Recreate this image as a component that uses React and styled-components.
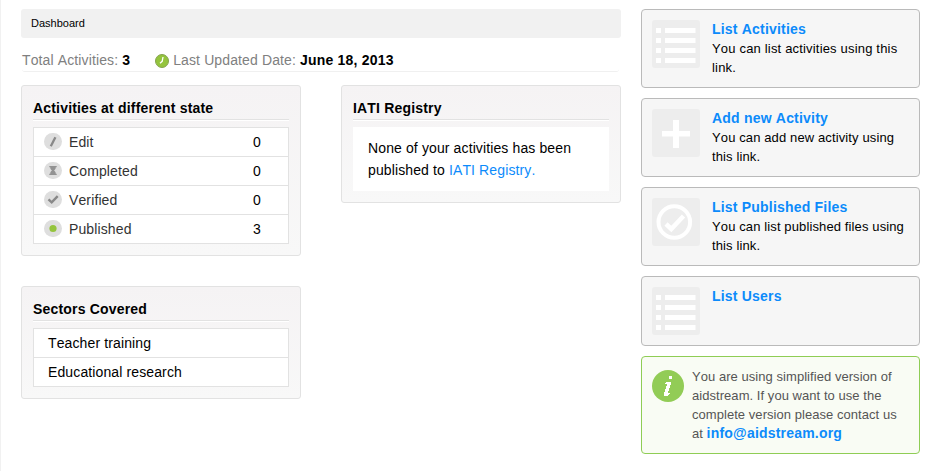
import React from 'react';
import styled, { createGlobalStyle } from 'styled-components';

const GlobalStyle = createGlobalStyle`
  * { box-sizing: border-box; }
  body {
    margin: 0;
    background: #fff;
    color: #000;
    font-family: "Liberation Sans", Arial, sans-serif;
    font-size: 14px;
    font-kerning: none;
    letter-spacing: 0.12px;
  }
`;

const Page = styled.div`
  display: flex;
  align-items: flex-start;
  gap: 20px;
  height: 471px;
  padding: 9px 0 0 20px;
  border-left: 1px solid #f1f1f1;
  overflow: hidden;
`;

const Main = styled.main`
  width: 600px;
`;

const Breadcrumb = styled.div`
  height: 29px;
  padding-left: 10px;
  border-radius: 3px;
  background: #f1f1f1;
  font-size: 11px;
  line-height: 28px;
  letter-spacing: 0;
`;

const Summary = styled.div`
  display: flex;
  height: 34px;
  margin: 0 2px 0 1px;
  padding-top: 12px;
  border-bottom: 1px solid #f0f0f0;
  border-radius: 3px;
  color: #808080;
  line-height: 20px;
`;

const SummaryItem = styled.div`
  display: flex;
  align-items: flex-start;
  gap: 4px;
  margin-right: 25px;
  white-space: nowrap;

  strong {
    color: #000;
    letter-spacing: 0.2px;
  }
`;

const Columns = styled.div`
  display: flex;
  align-items: flex-start;
  gap: 40px;
  margin-top: 13px;
`;

const Column = styled.div`
  display: grid;
  gap: 30px;
  width: 280px;
`;

const Panel = styled.section`
  padding: 11px;
  border: 1px solid #e2e2e2;
  border-radius: 3px;
  background: linear-gradient(#f5f3f4, #f8f8f8);
`;

const PanelTitle = styled.h2`
  height: 23px;
  margin: 0 0 7px;
  padding-top: 1px;
  border-bottom: 1px solid #e2e2e2;
  box-shadow: 0 1px #fff;
  font-size: 14px;
  line-height: 20px;
  letter-spacing: 0.18px;
`;

const List = styled.div`
  border: 1px solid #e2e2e2;
  background: #fff;
`;

const Row = styled.div`
  display: flex;
  align-items: center;
  height: ${({ $last }) => ($last ? 28 : 29)}px;
  padding: 0 27px 0 ${({ $plain }) => ($plain ? 14 : 10)}px;
  border-bottom: ${({ $last }) => ($last ? 0 : 1)}px solid #e2e2e2;
  color: ${({ $plain }) => ($plain ? '#000' : '#333')};
  line-height: 28px;
`;

const RowLabel = styled.span`
  flex: 1;
  margin-left: 7px;
`;

const Count = styled.span`
  color: #000;
`;

const Note = styled.div`
  padding: 10px 15px;
  background: #fff;
  line-height: 22px;
`;

const Link = styled.a`
  color: #0c8bfb;
  font-size: 14px;
  font-weight: ${({ $bold }) => ($bold ? 700 : 400)};
  letter-spacing: ${({ $bold }) => ($bold ? 0.2 : 0.12)}px;
  line-height: 1;
  text-decoration: none;
`;

const Sidebar = styled.aside`
  display: grid;
  gap: 10px;
  width: 279px;
`;

const Card = styled.div`
  display: flex;
  align-items: flex-start;
  gap: 12px;
  padding: 10px;
  border: 1px solid #bababa;
  border-radius: 4px;
  background: #f6f6f6;
  font-size: 13px;
  line-height: 19px;
`;

const InfoCard = styled(Card)`
  gap: 8px;
  border-color: #8fcd55;
  background: #f9fcf4;
  color: #555;
`;

const CardBody = styled.div`
  flex: 1;
  min-width: 0;
  letter-spacing: ${({ $tracking = 0.12 }) => $tracking}px;
`;

const CardTitle = styled.div`
  height: 19px;
`;

const Icon = styled.svg`
  display: block;
  flex: none;
`;

const InfoIcon = styled(Icon)`
  margin-top: 3px;
`;

const Clock = styled(Icon)`
  margin-top: 4px;
`;

const StateSvg = styled(Icon)`
  margin-bottom: 1px;
`;

const stateGlyphs = {
  edit: <path d="M6.8 13.2 11.4 4.2" stroke="#888" strokeWidth="2.3" fill="none" />,
  completed: (
    <path d="M5.3 4h7.4v1.3h-.9c0 1.800-1 2.500-1.800 3.200.9.7 1.800 1.500 1.800 3.200h.9V13H5.300v-1.300h.9c0-1.700.9-2.500 1.800-3.200-.8-.7-1.800-1.400-1.800-3.200h-.9Z" fill="#929292" />
  ),
  verified: <path d="m4.500 8.300 3.200 3 6-6.200" stroke="#888" strokeWidth="2.400" fill="none" />,
  published: <circle cx="9" cy="8.500" r="3.600" fill="#94c43d" />,
};

function StateIcon({ type }) {
  return (
    <StateSvg width="18" height="17" viewBox="0 0 18 17">
      <rect width="18" height="17" rx="8.500" fill="#dedede" />
      {stateGlyphs[type]}
    </StateSvg>
  );
}

const cardGlyphs = {
  list: [8, 18, 28, 38].map((y) => (
    <path key={y} d={`M4 ${y}h5v5H4zM13 ${y}h30.500v5H13z`} fill="#fff" />
  )),
  add: <path d="M21 11h6v11h11v5.500H27V39h-6V27.500H10V22h11Z" fill="#fff" />,
  check: (
    <g fill="none" stroke="#fff">
      <circle cx="22.300" cy="24" r="15.800" strokeWidth="4" />
      <path d="m14 26 5.300 5L31.500 18" strokeWidth="4.500" />
    </g>
  ),
};

function CardIcon({ type }) {
  return (
    <Icon width="48" height="48" viewBox="0 0 48 48">
      <rect width="48" height="48" rx="3" fill="#ededed" />
      {cardGlyphs[type]}
    </Icon>
  );
}

function ClockIcon() {
  return (
    <Clock width="14" height="14" viewBox="0 0 14 14">
      <circle cx="7" cy="7" r="6.500" fill="#94c43d" stroke="#85a34e" />
      <path d="M8 3 7.200 7.300 5 9.200" stroke="#fff" strokeWidth="1.300" fill="none" />
    </Clock>
  );
}

const states = [
  ['edit', 'Edit', 0],
  ['completed', 'Completed', 0],
  ['verified', 'Verified', 0],
  ['published', 'Published', 3],
];

const sectors = ['Teacher training', 'Educational research'];

const actions = [
  ['list', 'List Activities', 'You can list activities using this link.', 0.18],
  ['add', 'Add new Activity', 'You can add new activity using this link.'],
  ['check', 'List Published Files', 'You can list published files using this link.'],
  ['list', 'List Users', ''],
];

export default function App() {
  return (
    <>
      <GlobalStyle />
      <Page>
        <Main>
          <Breadcrumb>Dashboard</Breadcrumb>
          <Summary>
            <SummaryItem>
              <span>Total Activities: <strong>3</strong></span>
            </SummaryItem>
            <SummaryItem>
              <ClockIcon />
              <span>Last Updated Date: <strong>June 18, 2013</strong></span>
            </SummaryItem>
          </Summary>
          <Columns>
            <Column>
              <Panel>
                <PanelTitle>Activities at different state</PanelTitle>
                <List>
                  {states.map(([type, label, count], i) => (
                    <Row key={type} $last={i === states.length - 1}>
                      <StateIcon type={type} />
                      <RowLabel>{label}</RowLabel>
                      <Count>{count}</Count>
                    </Row>
                  ))}
                </List>
              </Panel>
              <Panel>
                <PanelTitle>Sectors Covered</PanelTitle>
                <List>
                  {sectors.map((name, i) => (
                    <Row key={name} $plain $last={i === sectors.length - 1}>{name}</Row>
                  ))}
                </List>
              </Panel>
            </Column>
            <Column>
              <Panel>
                <PanelTitle>IATI Registry</PanelTitle>
                <Note>
                  None of your activities has been published to <Link>IATI Registry.</Link>
                </Note>
              </Panel>
            </Column>
          </Columns>
        </Main>
        <Sidebar>
          {actions.map(([type, title, text, tracking]) => (
            <Card key={title}>
              <CardIcon type={type} />
              <CardBody $tracking={tracking}>
                <CardTitle><Link $bold>{title}</Link></CardTitle>
                {text}
              </CardBody>
            </Card>
          ))}
          <InfoCard>
            <InfoIcon width="32" height="32" viewBox="0 0 32 32">
              <circle cx="16" cy="16" r="16" fill="#92cc56" />
              <path d="M17 6h3v3h-3zM14 12h5v3h-1v3h-1v3h-1v2h2v1h-1v1h-1v1h-4v-4h1v-3h1v-3h1v-2h-2v-1h1Z" fill="#fff" />
            </InfoIcon>
            <CardBody $tracking={0.05}>
              You are using simplified version of aidstream. If you want to use the complete version please contact us at <Link $bold>info@aidstream.org</Link>
            </CardBody>
          </InfoCard>
        </Sidebar>
      </Page>
    </>
  );
}
